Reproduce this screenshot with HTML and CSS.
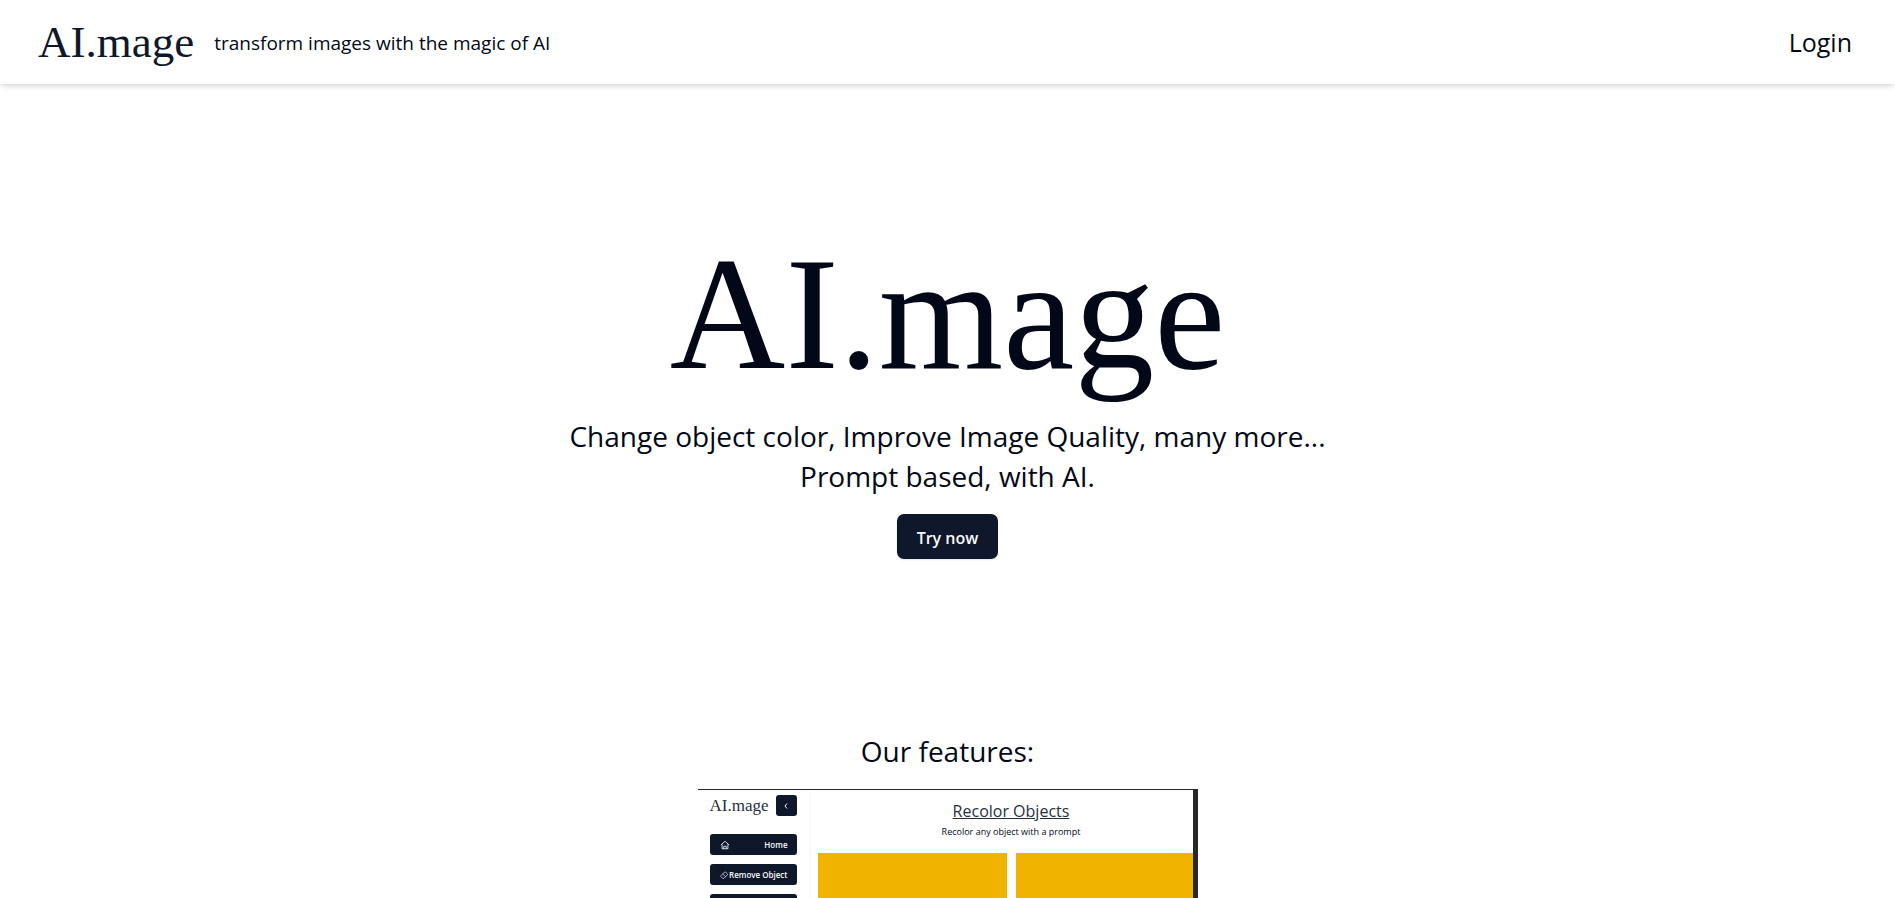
FILE: index.html
```html
<!DOCTYPE html>
<html lang="en">
<head>
<meta charset="utf-8">
<meta name="viewport" content="width=device-width, initial-scale=1">
<title>AI.mage</title>
<link rel="stylesheet" href="styles.css">
</head>
<body>
<header class="topbar">
  <a class="logo" href="#">AI.mage</a>
  <p class="tagline">transform images with the magic of AI</p>
  <a class="login" href="#">Login</a>
</header>
<main class="main">
  <section class="hero">
    <h1 class="hero-title">AI.mage</h1>
    <p class="lead">Change object color, Improve Image Quality, many more...<br>Prompt based, with AI.</p>
    <button class="cta" type="button">Try now</button>
  </section>
  <section class="features">
    <h2 class="features-title">Our features:</h2>
    <div class="demo">
      <aside class="side">
        <div class="side-head">
          <span class="side-logo">AI.mage</span>
          <button class="side-toggle" type="button" aria-label="Collapse menu">
            <svg width="8" height="8" viewBox="0 0 8 8"><path d="M5 1.500 3 4l2 2.500"/></svg>
          </button>
        </div>
        <button class="side-item" type="button">
          <svg width="10" height="10" viewBox="0 0 24 24"><path d="M2 12 12 3l10 9M5 10v11h14V10M9 21v-6h6v6"/></svg>
          <span>Home</span>
        </button>
        <button class="side-item" type="button">
          <svg width="8" height="8" viewBox="0 0 24 24"><path d="M3 14 14 3q2-1 3 0l5 6q1 1 0 3L12 22H8l-5-5q-1-1 0-3zM8 9l9 8"/></svg>
          <span>Remove Object</span>
        </button>
        <button class="side-item" type="button" aria-label="Recolor Objects"></button>
      </aside>
      <div class="stage">
        <h3 class="stage-title">Recolor Objects</h3>
        <p class="stage-text">Recolor any object with a prompt</p>
        <div class="panels"><div class="panel"></div><div class="panel"></div></div>
      </div>
    </div>
  </section>
</main>
</body>
</html>
```
FILE: styles.css
```css
* { box-sizing: border-box; margin: 0; }
body {
  height: 100vh;
  overflow: hidden;
  display: flex;
  flex-direction: column;
  background: #fff;
  color: #020817;
  font-family: "Open Sans", "Noto Sans", sans-serif;
}
button { font-family: inherit; border: 0; }
svg { flex: none; fill: none; stroke: currentColor; stroke-width: 2; }
.topbar {
  display: flex;
  align-items: center;
  flex: none;
  height: 84px;
  padding: 0 43px 0 38px;
  box-shadow: 0 4px 6px -1px rgba(0, 0, 0, .1), 0 2px 4px -2px rgba(0, 0, 0, .1);
}
.logo {
  color: #0f172a;
  font-family: "Liberation Serif", serif;
  font-size: 45px;
  line-height: 52px;
  text-decoration: none;
}
.tagline { margin-left: 20px; padding-top: 2px; font-size: 19px; line-height: 28px; }
.login {
  margin-left: auto;
  color: #020817;
  font-size: 25px;
  line-height: 32px;
  font-weight: 500;
  text-decoration: none;
}
.main { display: flex; flex-direction: column; flex: 1; min-height: 0; }
.hero {
  display: flex;
  flex-direction: column;
  align-items: center;
  padding-top: 140px;
}
.hero-title {
  font-family: "Liberation Serif", serif;
  font-size: 160px;
  line-height: 180px;
  font-weight: 400;
}
.lead {
  margin-top: 12px;
  font-size: 28px;
  line-height: 40px;
  font-weight: 400;
  text-align: center;
}
.cta {
  height: 45px;
  margin-top: 18px;
  padding: 2px 20px 0;
  border-radius: 7px;
  background: #0f172a;
  color: #f8fafc;
  font-size: 16px;
  font-weight: 600;
  box-shadow: 0 1px 2px rgba(0, 0, 0, .1);
}
.features {
  display: flex;
  flex-direction: column;
  align-items: center;
  flex: 1;
  min-height: 0;
  padding-top: 172px;
}
.features-title { font-size: 28px; line-height: 40px; font-weight: 400; }
.demo {
  display: flex;
  flex: 1;
  min-height: 0;
  width: 500px;
  margin-top: 18px;
  overflow: hidden;
  border-top: 1px solid #27272a;
  border-right: 5px solid #27282b;
}
.side {
  display: flex;
  flex-direction: column;
  gap: 9px;
  width: 113px;
  min-height: 0;
  overflow: hidden;
  padding: 5px 12px 0 12px;
  border-right: 2px solid #fafafa;
}
.side-head {
  display: flex;
  align-items: center;
  justify-content: space-between;
  flex: none;
  margin-bottom: 9px;
}
.side-logo { color: #27303f; font-family: "Liberation Serif", serif; font-size: 17px; line-height: 20px; }
.side-toggle {
  display: flex;
  align-items: center;
  justify-content: center;
  width: 21px;
  height: 21px;
  padding: 0;
  border-radius: 3px;
  background: #0f172a;
  color: #f8fafc;
}
.side-toggle svg { stroke-width: 1; }
.side-item {
  display: flex;
  align-items: center;
  justify-content: space-between;
  flex: none;
  height: 21px;
  padding: 0 9px 0 10px;
  border-radius: 3px;
  background: #0f172a;
  color: #f8fafc;
  font-size: 8px;
  font-weight: 600;
  white-space: nowrap;
}
.stage { display: flex; flex-direction: column; flex: 1; padding: 9px 0 0 7px; }
.stage-title {
  padding-left: 12px;
  color: #27303f;
  font-size: 16px;
  line-height: 24px;
  font-weight: 400;
  text-align: center;
  text-decoration: underline;
}
.stage-text {
  margin-top: 3px;
  padding-left: 12px;
  font-size: 9px;
  line-height: 12px;
  font-weight: 400;
  text-align: center;
}
.panels {
  display: grid;
  grid-template-columns: 189px 1fr;
  gap: 9px;
  flex: 1;
  margin-top: 15px;
}
.panel { background: #f0b400; }
```
